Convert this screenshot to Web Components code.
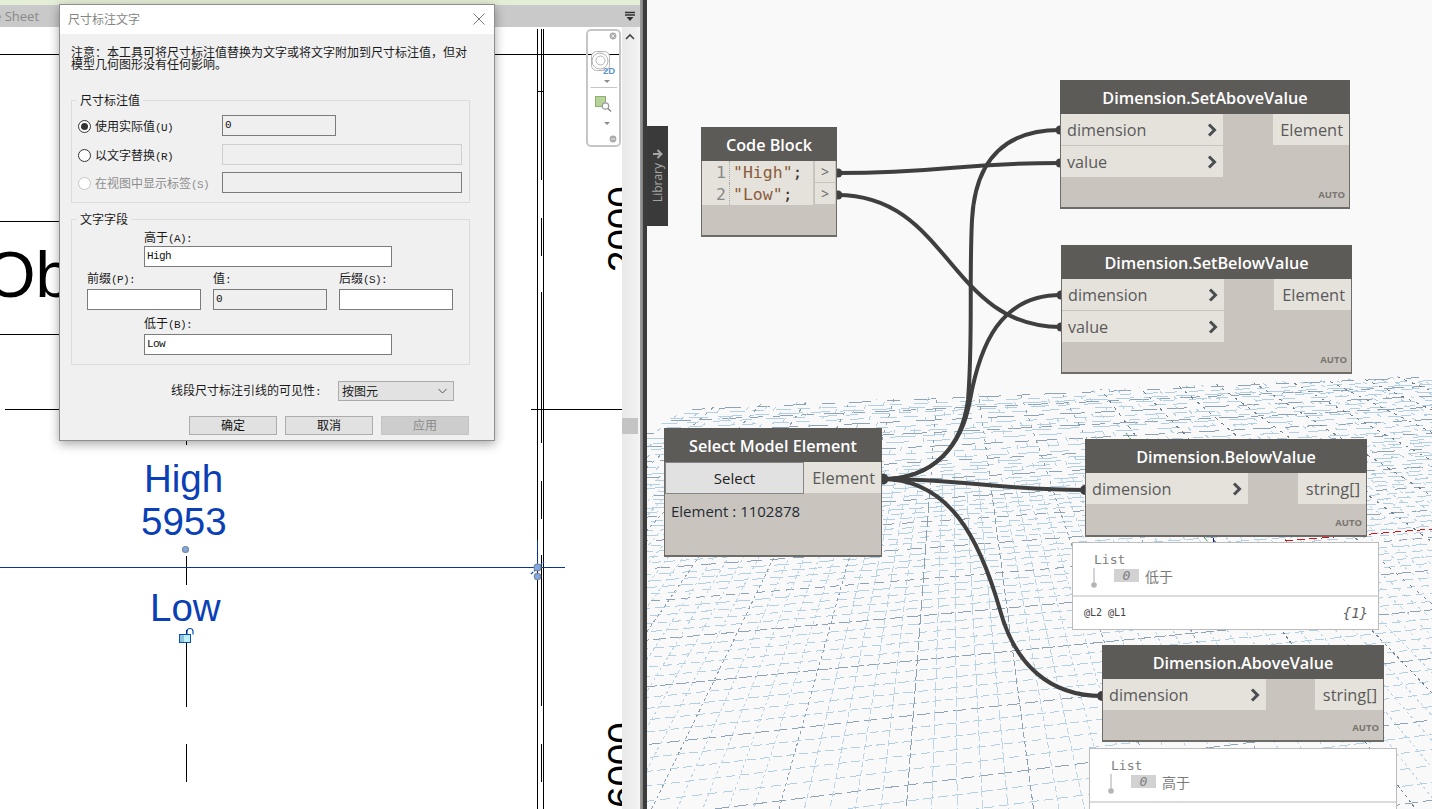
<!DOCTYPE html>
<html lang="zh"><head><meta charset="utf-8"><title>Dimension</title>
<style>
html,body{margin:0;height:809px;overflow:hidden;background:#f9f9f9}
body{display:flex;font-family:"Noto Sans CJK SC","Noto Sans",sans-serif}
.l{font:11px/12px "Liberation Mono","DejaVu Sans Mono",monospace;letter-spacing:-.6px}
.s{color:#8a5c3a}
</style></head><body>
<rv-pane tab="e Sheet">
  <rv-drawing></rv-drawing>
  <rv-dialog slot="over" heading="尺寸标注文字">
    <rv-note>注意&#xFF1A;本工具可将尺寸标注值替换为文字或将文字附加到尺寸标注值&#xFF0C;但对<br>模型几何图形没有任何影响。</rv-note>
    <rv-group legend="尺寸标注值" style="margin-top:24px">
      <rv-radio-row checked>使用实际值<span class="l">(U)</span><rv-input slot="field" kind="grey" style="width:114px">0</rv-input></rv-radio-row>
      <rv-radio-row style="margin-top:8px">以文字替换<span class="l">(R)</span><rv-input slot="field" kind="faint" style="width:240px"></rv-input></rv-radio-row>
      <rv-radio-row off style="margin-top:7px">在视图中显示标签<span class="l">(S)</span><rv-input slot="field" kind="grey" style="width:240px"></rv-input></rv-radio-row>
    </rv-group>
    <rv-group legend="文字字段" wide style="margin-top:10px">
      <rv-field style="margin:6px 0 0 57px;width:248px" gap="3" label="高于"><span slot="key" class="l">(A):</span><rv-input>High</rv-input></rv-field>
      <rv-triple style="margin-top:5px">
        <rv-field gap="5" label="前缀"><span slot="key" class="l">(P):</span><rv-input></rv-input></rv-field>
        <rv-field gap="5" label="值"><span slot="key" class="l">:</span><rv-input kind="grey">0</rv-input></rv-field>
        <rv-field gap="5" label="后缀"><span slot="key" class="l">(S):</span><rv-input></rv-input></rv-field>
      </rv-triple>
      <rv-field style="margin:7px 0 0 57px;width:248px" gap="5" label="低于"><span slot="key" class="l">(B):</span><rv-input>Low</rv-input></rv-field>
    </rv-group>
    <rv-select-row value="按图元">线段尺寸标注引线的可见性<span class="l">:</span></rv-select-row>
    <rv-buttons>
      <rv-btn>确定</rv-btn><rv-btn>取消</rv-btn><rv-btn off>应用</rv-btn>
    </rv-buttons>
  </rv-dialog>
</rv-pane>
<dy-split></dy-split>
<dy-canvas>
  <dy-node style="left:413px;top:80px;width:290px;height:129px" name="Dimension.SetAboveValue" lw="162" rw="76">
    <dy-port slot="in">dimension</dy-port><dy-port slot="in">value</dy-port><dy-out slot="out">Element</dy-out>
  </dy-node>
  <dy-node style="left:414px;top:245px;width:291px;height:129px" name="Dimension.SetBelowValue" lw="162" rw="77">
    <dy-port slot="in">dimension</dy-port><dy-port slot="in">value</dy-port><dy-out slot="out">Element</dy-out>
  </dy-node>
  <dy-code style="left:54px;top:127px;width:136px;height:110px" name="Code Block">
    <dy-line n="1"><span class="s">"High"</span>;</dy-line>
    <dy-line n="2"><span class="s">"Low"</span>;</dy-line>
  </dy-code>
  <dy-select style="left:17px;top:428px;width:218px;height:129px" name="Select Model Element" value="Element : 1102878"></dy-select>
  <dy-node style="left:438px;top:439px;width:282px;height:98px" name="Dimension.BelowValue" lw="162" rw="68">
    <dy-port slot="in">dimension</dy-port><dy-out slot="out">string[]</dy-out>
  </dy-node>
  <dy-preview style="left:425px;top:542px;width:307px;height:88px" val="低于"></dy-preview>
  <dy-node style="left:455px;top:645px;width:282px;height:97px" name="Dimension.AboveValue" lw="163" rw="68">
    <dy-port slot="in">dimension</dy-port><dy-out slot="out">string[]</dy-out>
  </dy-node>
  <dy-preview style="left:442px;top:748px;width:308px;height:88px" val="高于"></dy-preview>
  <dy-library></dy-library>
</dy-canvas>
<script>
const def=(name,html,init)=>customElements.define(name,class extends HTMLElement{
  constructor(){super();this.attachShadow({mode:'open'})}
  connectedCallback(){
    if(this.shadowRoot.innerHTML)return;
    const a=n=>this.getAttribute(n)||'';
    this.shadowRoot.innerHTML=typeof html==='function'?html(a,this):html;
    if(init)init(this.shadowRoot,this);
  }
});
const CJK='"Noto Sans CJK SC","Noto Sans",sans-serif', OS='"Open Sans","Noto Sans",sans-serif', MONO='"DejaVu Sans Mono","Liberation Mono",monospace';

/* ---------- Revit pane ---------- */
def('rv-pane',a=>`<style>
:host{display:flex;flex-direction:column;width:640px;height:809px;position:relative;overflow:hidden;background:#fff;flex:none}
.g{height:5px;background:#e4eed6}
.t{height:22px;background:#c9c9c9;display:flex;align-items:center;justify-content:space-between;color:#8a8a8a;font:13px ${OS};overflow:hidden}
.t span{margin-left:-6px}
.t svg{margin-right:4px}
.m{flex:1;display:flex;min-height:0}
.d{flex:1;min-width:0;overflow:hidden}
.sb{width:16px;background:linear-gradient(90deg,#e9e9e9,#f1f1f1);display:flex;flex-direction:column;align-items:center;position:relative}
.sb svg{margin-top:6px}
.th{position:absolute;left:0;right:0;top:391px;height:16px;background:#c4c4c4}
.e{width:2px;background:#f4f4f4}
</style>
<div class="g"></div>
<div class="t"><span>${a('tab')}</span><svg width="12" height="12" viewBox="0 0 12 12"><path d="M1 2.500h10M1 5h10" stroke="#333" stroke-width="1.400"/><path d="M2.500 7h7L6 11z" fill="#333"/></svg></div>
<div class="m"><div class="d"><slot></slot></div><div class="sb"><svg width="10" height="7" viewBox="0 0 10 7"><path d="M1 6l4-4 4 4" fill="none" stroke="#444" stroke-width="1.600"/></svg><div class="th"></div></div><div class="e"></div></div>
<slot name="over"></slot>`);

def('rv-drawing',`<style>:host{display:block;width:622px;height:782px;overflow:hidden}
svg{display:block} text{font-family:"Liberation Sans",Arial,sans-serif}</style>
<svg width="622" height="782" viewBox="0 27 622 782">
<g stroke="#000" stroke-width="1" shape-rendering="crispEdges">
<path d="M0 54.500H621M0 221.500H120M0 334.500H120M5 409.500H120M531 409.500H622"/>
<path d="M537.500 29V809M543.500 29V809"/>
<path d="M541.500 29V180M541.500 218V256M541.500 292V443M541.500 481V519M541.500 555V706M541.500 744V782"/>
<path d="M537 91.500H544"/>
<path d="M186.500 405V445M186.500 556V585M186.500 630V707M186.500 744V782"/>
</g>
<text x="-15" y="297" font-size="65">Ob</text>
<text font-size="38.500" transform="translate(635 272) rotate(-90)">2000</text>
<text font-size="38.500" transform="translate(635 808) rotate(-90)">6000</text>
<g fill="#0a3fb5" font-size="38.500">
<text x="144" y="492">High</text><text x="141" y="535">5953</text><text x="150" y="621">Low</text>
</g>
<g stroke="#0a3596" stroke-width="1" shape-rendering="crispEdges"><path d="M0 567.500H565M537.500 540V566"/></g>
<path d="M531 574L544 562" stroke="#1a55d0" stroke-width="1.300" stroke-dasharray="3 1"/>
<g fill="#7fa9e6" stroke="#7d8894" stroke-width="1.200"><circle cx="185.500" cy="549.500" r="3"/><circle cx="537.500" cy="567.500" r="3.400"/><circle cx="537.500" cy="576.500" r="3.200"/></g>
<g>
<path d="M187 636v-4.500a2 2 0 0 1 6 0v3" fill="none" stroke="#0a4fc0" stroke-width="1.200"/>
<rect x="179.500" y="634.500" width="11" height="8" fill="#bdf0fb" stroke="#0a4fc0"/>
<rect x="180" y="635" width="4" height="7" fill="#8fc4d8"/>
</g>
<g transform="translate(586 30)">
<rect x="1" y="0" width="33" height="116" rx="4" fill="none" stroke="#c6c6c6" stroke-width="2"/>
<circle cx="27" cy="6" r="3.400" fill="#aaa"/><path d="M25.300 4.300l3.400 3.400M28.700 4.300l-3.400 3.400" stroke="#eee" stroke-width="1"/>
<rect x="5.500" y="21.500" width="18" height="19" rx="5" fill="#fff" stroke="#b4b4b4"/>
<circle cx="14" cy="31" r="8" fill="none" stroke="#b4b4b4"/><circle cx="14.500" cy="30.500" r="4.500" fill="#fff" stroke="#b4b4b4"/>
<text x="17" y="44" font-size="9.500" font-weight="700" fill="#5f95cf">2D</text>
<path d="M18 50h6l-3 3z" fill="#8c8c8c"/>
<path d="M4.500 57.500H31" stroke="#c6c6c6"/>
<rect x="9.500" y="66.500" width="10" height="10" fill="#b6d39a" stroke="#8eb074"/>
<circle cx="19.500" cy="76" r="3.200" fill="#fff" stroke="#999" stroke-width="1.200"/><path d="M22 78.500l3 3" stroke="#888" stroke-width="1.500"/>
<path d="M18 92h6l-3 3z" fill="#8c8c8c"/>
<circle cx="27" cy="109" r="3.400" fill="#aaa"/><path d="M25 109h4" stroke="#eee"/>
</g>
</svg>`);

def('rv-dialog',a=>`<style>
:host{position:absolute;left:59px;top:4px;width:436px;box-sizing:border-box;border:1px solid #8e8e8e;background:#f0f0f0;box-shadow:0 3px 10px rgba(0,0,0,.35);font:12px/12px ${CJK};color:#1a1a1a}
.h{height:29px;box-sizing:border-box;padding:0 9px 2px 8px;background:#fff;display:flex;align-items:center;justify-content:space-between;color:#858585;font-size:12px}
.b{padding:12px 24px 5px 11px}
</style><div class="h"><span>${a('heading')}</span><svg width="12" height="12" viewBox="0 0 12 12"><path d="M.5.5l11 11M11.500.5l-11 11" stroke="#777" fill="none"/></svg></div><div class="b"><slot></slot></div>`);
def('rv-note',`<style>:host{display:block;line-height:12px;white-space:nowrap}</style><slot></slot>`);
def('rv-group',a=>{const first=a('legend')==='尺寸标注值';return `<style>:host{display:block}
fieldset{margin:0;padding:${first?'9px 0 9px 6px':'0 0 9px 15px'};border:1px solid #dcdcdc;min-width:0;width:399px;box-sizing:border-box}
legend{font:12px/12px ${CJK};padding:0 3px;margin-left:${first?'-1px':'-10px'}}
</style><fieldset><legend>${a('legend')}</legend><slot></slot></fieldset>`});
def('rv-radio-row',(a,t)=>{const off=t.hasAttribute('off'),on=t.hasAttribute('checked');return `<style>:host{display:grid;grid-template-columns:144px auto;height:21px;align-items:center;justify-content:start}
.l{display:flex;align-items:center;gap:4px;padding-top:2px;color:${off?'#8d8d8d':'inherit'};white-space:nowrap}
span{padding-top:1px}
svg{flex:none}</style>
<div class="l"><svg width="13" height="13" viewBox="0 0 13 13"><circle cx="6.500" cy="6.500" r="6" fill="#fff" stroke="${off?'#c4c4c4':'#333'}"/>${on?'<circle cx="6.500" cy="6.500" r="3.500" fill="#333"/>':''}</svg><span><slot></slot></span></div><slot name="field"></slot>`});
def('rv-input',(a)=>{const k=a('kind');const bg=k?'#efefef':'#fff';const bc=k==='faint'?'#cfcfcf':'#7b7b7b';return `<style>:host{display:block;box-sizing:border-box;height:21px;background:${bg};border:1px solid ${bc};padding:2px 0 0 2px;font:11px/14px "Liberation Mono","DejaVu Sans Mono",monospace;letter-spacing:-.6px;color:#111}</style><slot></slot>`});
def('rv-field',a=>`<style>:host{display:block}.k{height:12px;line-height:12px;white-space:nowrap;margin-bottom:${a('gap')}px}</style><div class="k">${a('label')}<slot name="key"></slot></div><slot></slot>`);
def('rv-triple',`<style>:host{display:grid;grid-template-columns:114px 114px 114px;column-gap:12px}</style><slot></slot>`);
def('rv-select-row',a=>`<style>:host{display:flex;align-items:center;margin:16px 0 0 100px;height:20px}
.t{width:167px;white-space:nowrap}
.s{width:116px;height:20px;box-sizing:border-box;background:#e2e2e2;border:1px solid #ababab;display:flex;align-items:center;justify-content:space-between;padding:0 6px 0 3px}
</style><div class="t"><slot></slot></div><div class="s"><span>${a('value')}</span><svg width="9" height="6" viewBox="0 0 9 6"><path d="M.5 1L4.500 5 8.500 1" fill="none" stroke="#555"/></svg></div>`);
def('rv-buttons',`<style>:host{display:flex;justify-content:flex-end;gap:8px;margin:15px 1px 0 0}</style><slot></slot>`);
def('rv-btn',(a,t)=>{const o=t.hasAttribute('off');return `<style>:host{display:flex;align-items:center;justify-content:center;width:88px;height:19px;box-sizing:border-box;padding-bottom:2px;background:${o?'#cdcdcd':'#e1e1e1'};border:1px solid ${o?'#c4c4c4':'#adadad'};color:${o?'#8a8a8a':'#111'}}</style><slot></slot>`});

def('dy-split',`<style>:host{display:block;width:7px;height:809px;flex:none;background:linear-gradient(90deg,#a0a0a0 0,#808080 3px,#3c3c3c 3px)}</style>`);

/* ---------- Dynamo canvas ---------- */
def('dy-canvas',`<style>:host{display:block;position:relative;flex:1;height:809px;overflow:hidden;background:#f9f9f9}
svg{position:absolute;left:-647px;top:0;width:1432px;height:809px}
</style>
<svg class="grid" viewBox="0 0 1432 809"></svg>
<svg class="wires" viewBox="0 0 1432 809"><g fill="none" stroke="#3f3f3f" stroke-width="4">
<path d="M837 173C950 173 950 163 1060 163"/>
<path d="M837 195C950 195 948 327 1061 327"/>
<path d="M882 479C935 479 962 445 968 400C973 340 969 280 972 220C975 160 1005 130 1060 130"/>
<path d="M882 479C935 479 962 445 970 400C980 345 1000 295 1061 295"/>
<path d="M882 479C960 479 1000 490 1085 490"/>
<path d="M882 479C950 479 980 540 1000 610C1015 665 1050 696 1102 696"/>
</g><g fill="#3f3f3f">
<circle cx="1060" cy="130" r="4.500"/><circle cx="1060" cy="163" r="4.500"/><circle cx="1061" cy="295" r="4.500"/><circle cx="1061" cy="327" r="4.500"/>
<circle cx="1085" cy="490" r="5"/><circle cx="1102" cy="696" r="5"/>
<circle cx="838" cy="173" r="4.500"/><circle cx="838" cy="195" r="4.500"/><circle cx="883" cy="479" r="5.500"/>
</g></svg>
<slot></slot>`,root=>{
  const g=root.querySelector('.grid'), V1=[952,191], VX=5700, VY=191, A=23800;
  let s=`<defs><clipPath id="c"><polygon points="647,432 690,407 1432,375 1432,809 647,809"/></clipPath></defs><g clip-path="url(#c)" fill="none" shape-rendering="crispEdges">`;
  let seed=7; const R=()=>(seed=(seed*16807)%2147483647)/2147483647;
  const ri=(a,b)=>a+(R()*(b-a+1)|0);
  for(let k=30;k<=110;k++){
    const major=(k-3)%5===0;
    if(k>84 && k%2 && !major) continue;
    const h=A/k, f=x=>VY+h*(VX-x)/(VX-647);
    let d;
    if(k>72) d=`${ri(10,26)} ${ri(7,14)} ${ri(12,24)} ${ri(8,18)}`;
    else if(k>55) d=`${ri(9,15)} ${ri(5,8)}`;
    else d=major?`${ri(11,14)} ${ri(3,5)}`:`${ri(8,11)} ${ri(4,6)}`;
    s+=`<path d="M640 ${f(640).toFixed(1)}L1432 ${f(1432).toFixed(1)}" stroke="${major?'#8ea3b5':'#b3cfe3'}" stroke-dasharray="${d}" stroke-dashoffset="${ri(0,30)}"/>`;
  }
  for(let n=-36;n<=66;n++){
    const sl=-.074+.0412*n, yM=478;
    const X=y=>(V1[0]+(y-V1[1])*sl).toFixed(1);
    const major=n%5===0, as=Math.abs(sl);
    const d=as<.1?'11 3':as<.25?'6 3':as>1?'3 6':'3 3';
    const col=major?(sl>.7?'#6f7f8b':'#8a9fb0'):'#bcd5e6';
    s+=`<path d="M${X(340)} 340L${X(yM)} ${yM}" stroke="${major?col:'#b3cfe3'}" stroke-dasharray="${major?'3 5':'4 17'}" stroke-dashoffset="${ri(0,20)}"/>`;
    s+=`<path d="M${X(yM)} ${yM}L${X(830)} 830" stroke="${col}" stroke-dasharray="${d}" stroke-dashoffset="${ri(0,8)}"/>`;
  }
  s+=`</g><path d="M1285 541L1432 529" stroke="#e01010" fill="none" stroke-dasharray="8 4" shape-rendering="crispEdges"/><path d="M1126 433L1132 441M1204 537L1208 542" stroke="#2a8a2a" fill="none" stroke-dasharray="2 1"/><path d="M1213.500 538V543" stroke="#1010c0"/>`;
  g.innerHTML=s;
});

const NODE=`:host{position:absolute;box-sizing:border-box;display:flex;flex-direction:column;background:#c9c5be;border:1px solid #6e6c69;border-bottom-width:2px;border-top:0;font-family:${OS}}
.h{height:34px;box-sizing:border-box;padding-top:2px;flex:none;margin:0 -1px;background:#5d5b58;color:#fff;font:600 16.200px/32px ${OS};text-align:center;white-space:nowrap}`;
def('dy-node',a=>`<style>${NODE}
.p{display:flex;justify-content:space-between}
.i{width:${a('lw')}px;display:flex;flex-direction:column;gap:1px}
.o{width:${a('rw')}px}
.f{margin-top:auto;text-align:right;font:700 9.500px/12px ${OS};color:#7a7670;padding:0 4px 6px 0}
</style><div class="h">${a('name')}</div><div class="p"><div class="i"><slot name="in"></slot></div><div class="o"><slot name="out"></slot></div></div><div class="f">AUTO</div>`);
def('dy-port',`<style>:host{display:flex;align-items:center;justify-content:space-between;height:31px;background:#e5e2dc;color:#5a5a5a;font:16.200px/29px ${OS};padding:0 6px 0 6px}
span{display:block;padding-top:2px}
</style><span><slot></slot></span><svg width="10" height="14" viewBox="0 0 10 14"><path d="M2 1.500L7.500 7 2 12.500" fill="none" stroke="#4a4d52" stroke-width="3"/></svg>`);
def('dy-out',`<style>:host{display:block;box-sizing:border-box;height:31px;padding:1px 6px 0 0;background:#e5e2dc;color:#5a5a5a;font:16.400px/29px ${OS};text-align:right}</style><slot></slot>`);
def('dy-code',a=>`<style>${NODE}
.b{display:flex;flex-direction:column;margin-right:1px}
</style><div class="h">${a('name')}</div><div class="b"><slot></slot></div>`);
def('dy-line',a=>`<style>:host{display:grid;grid-template-columns:28px 83px 1fr;height:22px;background:#e5e2dc;font:16.500px/21px ${MONO};color:#333;box-sizing:border-box}
div{padding-top:1px}
.n{color:#888;text-align:right;padding-right:3px;border-right:1px dotted #aaa}
.c{padding-left:3px;white-space:pre}
.p{border-left:2px solid #c9c5be;border-bottom:1px solid #c9c5be;color:#666;text-align:center;font:14px/20px ${OS}}
</style><div class="n">${a('n')}</div><div class="c"><slot></slot></div><div class="p">&gt;</div>`);
def('dy-select',a=>`<style>${NODE}
.r{display:flex;height:32px}
.s{width:139px;box-sizing:border-box;padding-top:1px;background:#e1e1e1;border:1px solid #868686;color:#222;font:15px/29px ${OS};text-align:center}
.e{flex:1;box-sizing:border-box;padding:1px 6px 0 0;background:#e5e2dc;color:#5a5a5a;font:16.400px/29px ${OS};text-align:right;height:31px}
.v{color:#1f2a36;font:15px/20px ${OS};padding:7px 6px}
</style><div class="h">${a('name')}</div><div class="r"><div class="s">Select</div><div class="e">Element</div></div><div class="v">${a('value')}</div>`);
def('dy-preview',a=>`<style>:host{position:absolute;box-sizing:border-box;background:#fff;border:1px solid #bcbcbc;display:flex;flex-direction:column}
.t{height:54px;flex:none;box-sizing:border-box;border-bottom:2px solid #dcdcdc;padding:8px 0 0 21px;color:#808080;position:relative}
.n{font:13px/18px ${MONO}}
.r{display:flex;align-items:flex-start;gap:6px}
.i{margin-left:20px;width:25px;height:13px;background:#d2d2d2;color:#808080;font:italic 13px/13px ${MONO};text-align:center}
.v{font:14px/14px ${CJK};color:#7a7a7a}
svg{position:absolute;left:17px;top:25px}
.f{flex:1;display:flex;justify-content:space-between;align-items:center;padding:0 10px 0 11px;border-top:0;height:32px}
.a{font:10px/12px ${MONO};color:#444}
.b{font:italic 14px/14px ${MONO};color:#5f5f5f}
</style><div class="t"><div class="n">List</div><svg width="8" height="22" viewBox="0 0 8 22"><path d="M4 0V15" stroke="#aaa"/><circle cx="4" cy="17" r="2.800" fill="#b5b5b5"/></svg><div class="r"><div class="i">0</div><div class="v">${a('val')}</div></div></div><div class="f"><span class="a">@L2 @L1</span><span class="b">{1}</span></div>`);
def('dy-library',`<style>:host{position:absolute;left:0;top:126px;width:21px;height:100px;background:#3a3a3a;display:flex;flex-direction:column;align-items:center;color:#a5a5a5}
svg{margin-top:23px;flex:none}
span{writing-mode:vertical-rl;transform:rotate(180deg);font:12px/21px ${OS};margin-top:4px}
</style><svg width="11" height="10" viewBox="0 0 11 10"><path d="M1 5h8M5.500 1L9.500 5l-4 4" fill="none" stroke="#a5a5a5" stroke-width="2"/></svg><span>Library</span>`);
</script>
</body></html>
